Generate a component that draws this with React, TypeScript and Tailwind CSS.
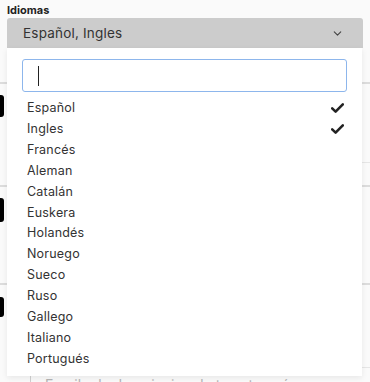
import { ChevronDown } from "lucide-react";

const idiomas = [
  { name: "Español", checked: true },
  { name: "Ingles", checked: true },
  { name: "Francés" },
  { name: "Aleman" },
  { name: "Catalán" },
  { name: "Euskera" },
  { name: "Holandés" },
  { name: "Noruego" },
  { name: "Sueco" },
  { name: "Ruso" },
  { name: "Gallego" },
  { name: "Italiano" },
  { name: "Portugués" },
];

function Check() {
  return (
    <svg width="13" height="10" viewBox="0 0 13 10" fill="none">
      <path d="M1.2 5.4 L4.6 8.6 L11.8 1.4" stroke="#222" strokeWidth="2.6" strokeLinecap="round" strokeLinejoin="round" />
    </svg>
  );
}

export default function App() {
  return (
    <div className="relative h-[382px] w-[370px] overflow-hidden bg-[#fafafa] font-['Inter',sans-serif]">
      {/* campo idiomas */}
      <div className="px-[7px] pt-[3px]">
        <div className="text-[11px] font-bold leading-[14px] text-[#222]">Idiomas</div>
        <div className="mt-[1px] flex h-[30px] items-center justify-between rounded-t-[3px] bg-[#cccccc] pl-[16px] pr-[19px]">
          <span className="text-[13.5px] tracking-[0.2px] text-[#333]">Español, Ingles</span>
          <ChevronDown size={13} strokeWidth={2} className="text-[#444]" />
        </div>
      </div>

      {/* formulario de fondo */}
      <div className="h-[34px]" />
      <div className="h-[103px] border-t-2 border-[#dcdcdc]">
        <div className="mt-[11px] h-[22px] w-[4px] rounded-r-[3px] bg-black" />
        <div className="ml-[30px] h-[46px] border-b border-[#e6e6e6]" />
      </div>
      <div className="h-[98px] border-t-2 border-[#dcdcdc]">
        <div className="mt-[11px] h-[24px] w-[4px] rounded-r-[3px] bg-black" />
      </div>
      <div className="border-t-2 border-[#dcdcdc]">
        <div className="mt-[12px] h-[20px] w-[4px] rounded-r-[3px] bg-black" />
        <div className="ml-[30px] h-[51px] border-b border-[#e6e6e6]" />
        <div className="ml-[30px] border-l border-[#d0d0d0] pl-[14px] pt-[8px] text-[14px] leading-[18px] text-[#b5b5b5]">
          Escribe la descripcion de tu categoría
        </div>
      </div>

      {/* desplegable */}
      <div className="absolute left-[7px] top-[48px] w-[355px] bg-white pb-[6px] shadow-[0_2px_6px_rgba(0,0,0,0.08)]">
        <div className="mx-[15px] mt-[11px] flex h-[33px] items-center rounded-[3px] border border-[#8db6ec] pl-[15px]">
          <div className="h-[20px] w-px bg-[#222]" />
        </div>
        <ul className="mt-[6px]">
          {idiomas.map((i) => (
            <li key={i.name} className="flex h-[20.9px] items-center justify-between pl-[20px] pr-[18px] text-[12.5px] tracking-[0.2px] text-[#333]">
              <span>{i.name}</span>
              {i.checked && <Check />}
            </li>
          ))}
        </ul>
      </div>
    </div>
  );
}
